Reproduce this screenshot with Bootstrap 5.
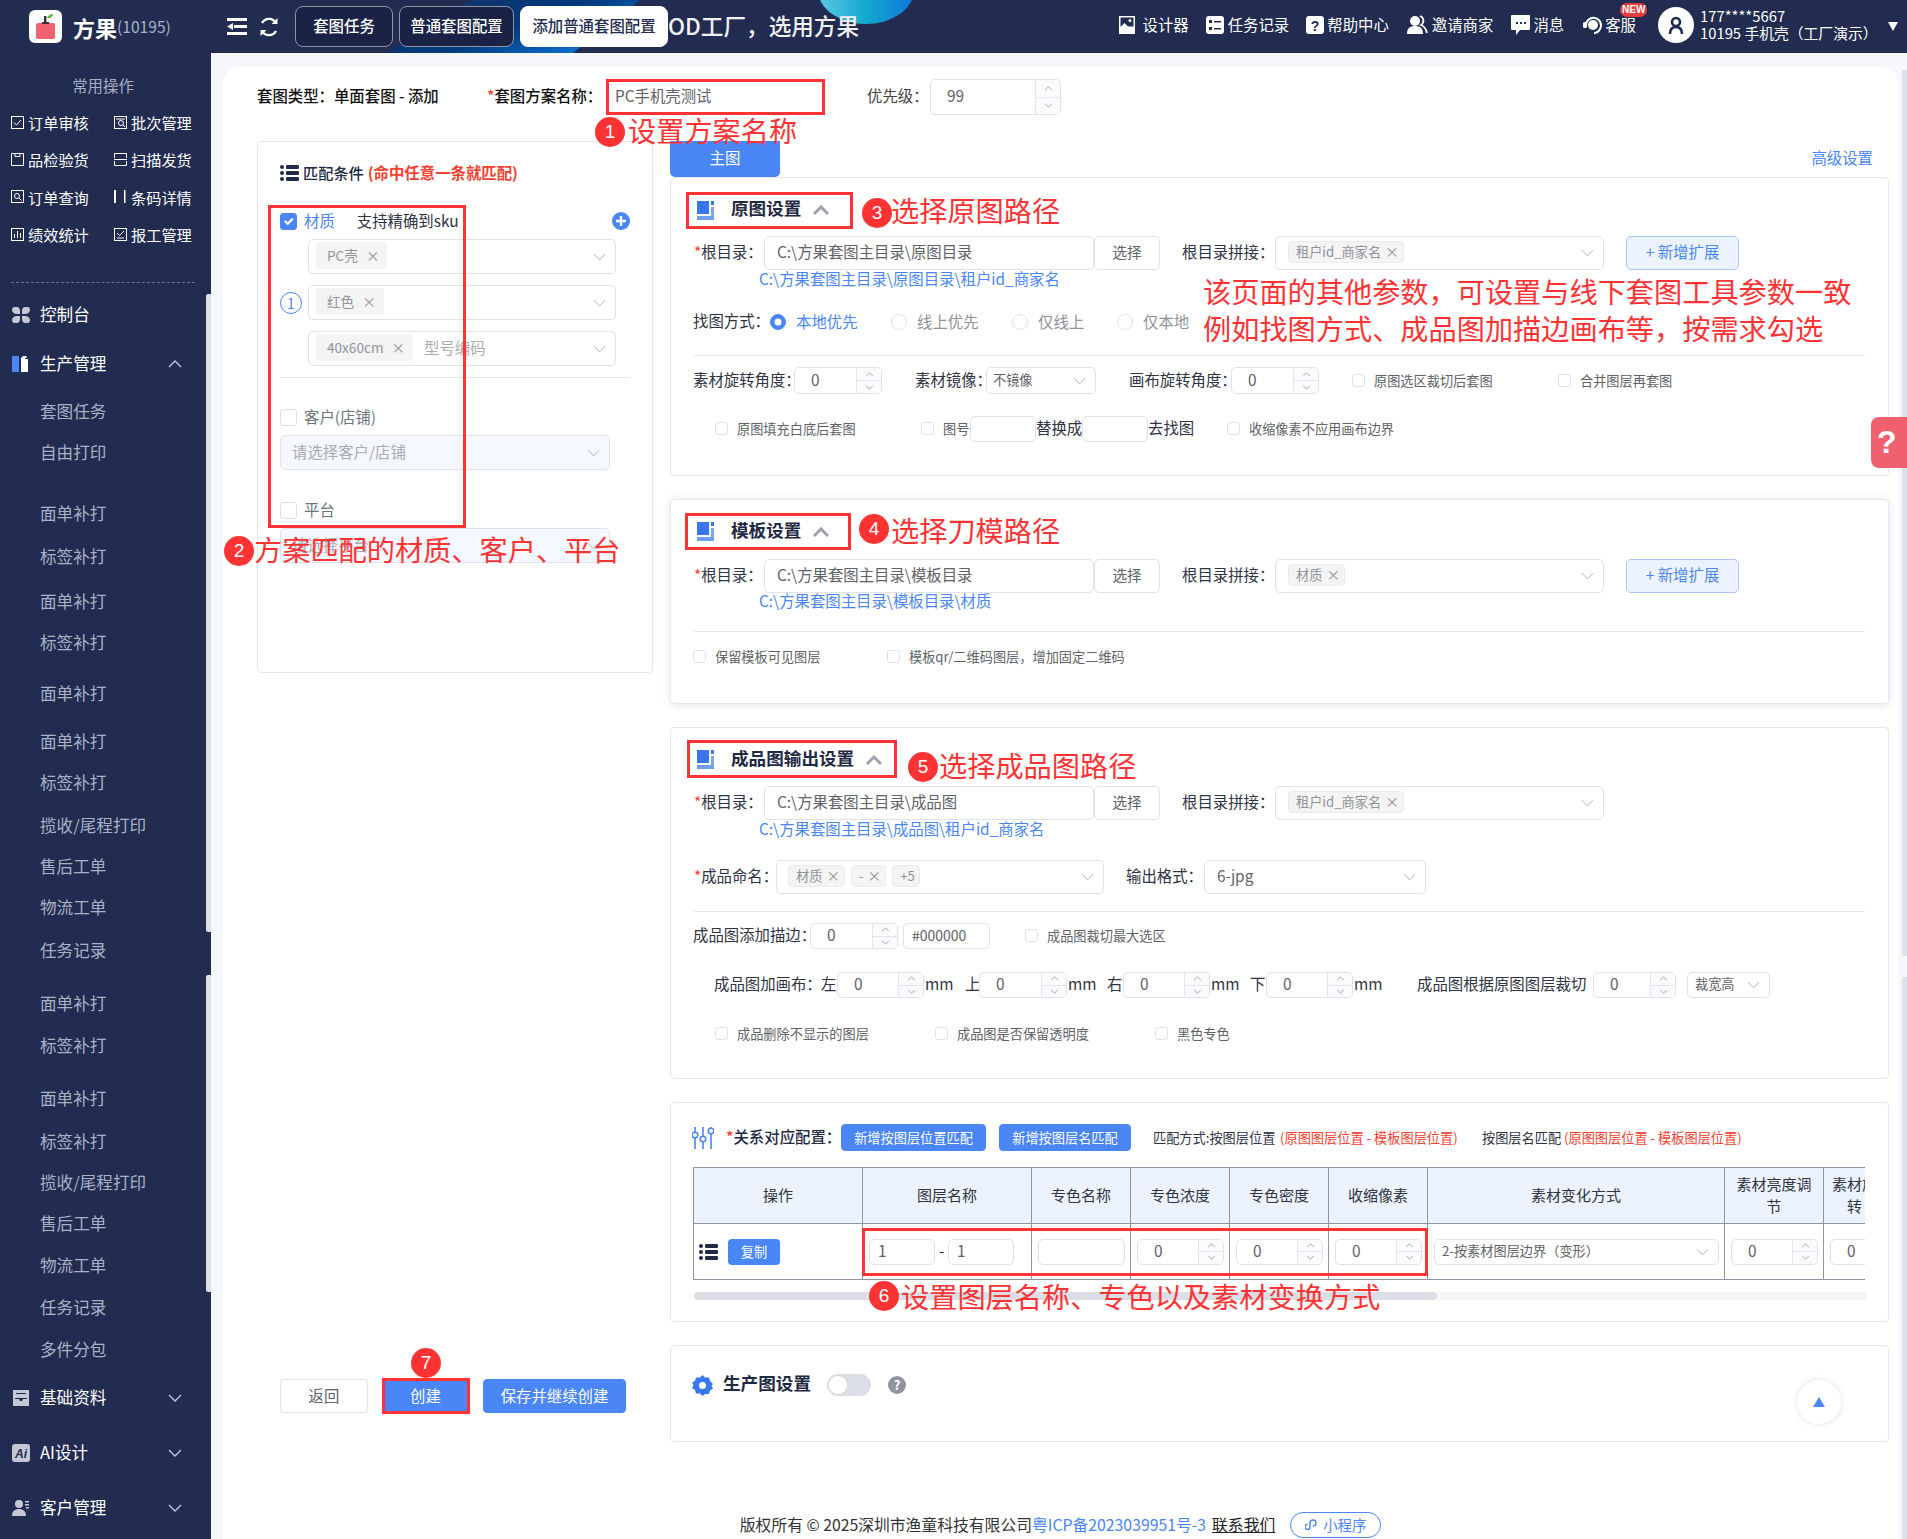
<!doctype html>
<html lang="zh-CN">
<head>
<meta charset="utf-8">
<title>添加普通套图配置</title>
<link href="https://cdn.jsdelivr.net/npm/bootstrap@5.3.0/dist/css/bootstrap.min.css" rel="stylesheet">
<style>
body{width:1907px;height:1539px;overflow:hidden;position:relative;margin:0;background:#f5f7fd;font-family:"Noto Sans CJK SC","Noto Sans",sans-serif;font-size:15.4px;color:#2f3342}
/* atoms */
.ml1{margin-left:1px}.ml2{margin-left:2px}.ml3{margin-left:3px}.ml4{margin-left:4px}.ml5{margin-left:5px}.ml6{margin-left:6px}.ml7{margin-left:7px}.ml8{margin-left:8px}.ml10{margin-left:10px}.ml11{margin-left:11px}.ml12{margin-left:12px}.ml13{margin-left:13px}.ml14{margin-left:14px}.ml17{margin-left:17px}.ml18{margin-left:18px}.ml19{margin-left:19px}.ml20{margin-left:20px}.ml21{margin-left:21px}.ml22{margin-left:22px}.ml23{margin-left:23px}.ml32{margin-left:32px}.ml33{margin-left:33px}.ml34{margin-left:34px}.ml42{margin-left:42px}
.mt1{margin-top:1px}.mt7{margin-top:7px}.mt8{margin-top:8px}.mt9{margin-top:9px}.mt11{margin-top:11px}.mt12{margin-top:12px}.mt13{margin-top:13px}.mt14{margin-top:14px}.mt15{margin-top:15px}.mt16{margin-top:16px}.mt17{margin-top:17px}.mt20{margin-top:20px}.mt21{margin-top:21px}.mt22{margin-top:22px}.mt23{margin-top:23px}.mt26{margin-top:26px}.mt28{margin-top:28px}.mt29{margin-top:29px}.mt30{margin-top:30px}
.wd14{width:14px}.wd16{width:16px}.wd27{width:27px}.wd29{width:29px}.wd46{width:46px}.wd47{width:47px}.wd66{width:66px}.wd67{width:67px}.wd75{width:75px}.wd76{width:76px}.wd78{width:78px}.wd83{width:83px}.wd87{width:87px}.wd88{width:88px}.wd97{width:97px}.wd105{width:105px}.wd110{width:110px}.wd113{width:113px}.wd121{width:121px}.wd122{width:122px}.wd131{width:131px}.wd171{width:171px}.wd179{width:179px}.wd194{width:194px}.wd206{width:206px}.wd219{width:219px}.wd220{width:220px}.wd222{width:222px}.wd330{width:330px}.wd328{width:328px}
.ht20{height:20px}.ht24{height:24px}.ht26{height:26px}.ht27{height:27px}.ht34{height:34px}.ht35{height:35px}.ht36{height:36px}.ht37{height:37px}.ht38{height:38px}
.nw{white-space:nowrap}
.sm13{font-size:13.2px}
.gap6{gap:6px}
/* top bar */
.topbar{height:53px;background:#212c50;position:relative;overflow:hidden;padding-left:29px}
.swoosh{position:absolute;left:0;top:0}
.logo-box{width:33px;height:33px;background:#fff;border-radius:6px;flex:none}
.brand-name{font-size:22px;font-weight:700;color:#fff;margin-left:11px;line-height:1}
.brand-id{font-size:15.6px;color:#a9b1c6;width:96px;line-height:1}
.hd-btn{width:20px;flex:none;color:#fff}
.tabx{height:41px;border:1px solid #8f94a6;border-radius:8px;background:#1a2346;color:#fff;font-size:15.4px;font-weight:500;display:flex;align-items:center;justify-content:center;position:relative;flex:none;padding-bottom:2px}
.tab1{width:98px;margin-left:16px}.tab2{width:115px;margin-left:6px}.tab3{width:148px;margin-left:6px;background:#fff;color:#212c50;border-color:#fff}
.slogan{font-size:22.6px;font-weight:500;color:#f0f1f5;position:relative;line-height:1;white-space:nowrap;width:192px}
.tool{display:flex;align-items:center;color:#fff;font-size:15.4px;line-height:1;white-space:nowrap;position:relative}
.tool svg{flex:none}
.tools{margin-left:auto;position:relative;padding:0 9px 3px 0}
.newtag{position:absolute;left:37px;top:-12px;width:27px;height:14px;border-radius:7px;background:#e53c3c;color:#fff;font-size:10px;font-weight:700;line-height:14px;text-align:center;font-family:"Liberation Sans",sans-serif}
.ava{width:36px;height:36px;border-radius:50%;background:#fff;display:flex;align-items:center;justify-content:center;flex:none}
.who{width:188px;margin-left:6px;margin-bottom:3px;color:#fff;font-size:14.8px;line-height:17px;white-space:nowrap}
.caret-d{width:0;height:0;border-left:5px solid transparent;border-right:5px solid transparent;border-top:9px solid #fff;margin-top:2px}
/* sidebar */
.bodywrap{height:1486px}
.sideb{width:211px;flex:none;background:#212c50;position:relative;overflow:hidden}
.sb-title{height:22px;line-height:22px;margin-top:21px;text-align:center;color:#a9b1c6;font-size:15.4px;width:206px}
.quick{display:grid;grid-template-columns:103px 103px;padding-left:11px;margin-top:8px}
.qitem{height:37.2px;display:flex;align-items:center;gap:4px;color:#fff;font-size:15.2px;white-space:nowrap}
.qitem svg{flex:none}
.dash{border-top:1px dashed #6b7490;width:184px;margin:29px 0 0 11px}
.mitem{height:42px;display:flex;align-items:center;color:#fff;font-size:16.6px;padding-left:12px;position:relative}
.mitem .mi-ic{width:18px;height:18px;flex:none;margin-right:10px}
.mitem .arrow{position:absolute;left:168px;top:17px}
.si{height:41px;line-height:41px;padding-left:40px;color:#a9b1c6;font-size:16.6px;white-space:nowrap}
.gt1{margin-top:1px}.gt2{margin-top:2px}.gt4{margin-top:4px}.gt7{margin-top:7px}.gt10{margin-top:10px}.gt12{margin-top:12px}.gt20{margin-top:20px}
.mg6{margin-top:6px}.mg7{margin-top:7px}.mg11{margin-top:11px}.mg13{margin-top:13px}
.sbar{position:absolute;left:206px;width:5px;background:#dcdee8;border-radius:2px 0 0 2px}
.sbar1{top:241px;height:638px}.sbar2{top:922px;height:317px}
/* main */
.mainp{flex:1;min-width:0;padding:14px 9px 0 12px}
.panel{background:#fff;border-radius:16px 16px 0 0;height:1472px;padding:12px 9px 0 34px}
.toprow{height:36px;margin-bottom:26px;white-space:nowrap;color:#111;font-weight:500}
.req{color:#f5412f}
.fld.form-control,.fld.form-select{min-height:0;border:1px solid #dfe1ec;border-radius:5px;padding:0 12px 2px;font-size:15.4px;color:#606266;display:flex;align-items:center;line-height:1;background-color:#fff;white-space:nowrap;flex:none}
.fld.form-select{background-image:url("data:image/svg+xml,%3Csvg xmlns='http://www.w3.org/2000/svg' viewBox='0 0 14 8'%3E%3Cpath d='M1 1l6 6 6-6' fill='none' stroke='%23a8abb2'/%3E%3C/svg%3E");background-size:13px 8px;background-position:right 9px center;background-repeat:no-repeat;padding-right:28px}
.fld.dis{background-color:#f5f8ff;color:#a8abb2;padding-left:11px}
.numb.form-control{padding:0 0 0 16px;justify-content:space-between;align-items:stretch}
.numb>span:first-child{align-self:center;padding-bottom:2px}
.stp{width:25px;border-left:1px solid #e4e6ee;display:flex;flex-direction:column;flex:none;background:#fbfbfd;border-radius:0 4px 4px 0}
.stp i{flex:1;display:block;background-size:9px 5px;background-position:center;background-repeat:no-repeat}
.stp .up{border-bottom:1px solid #e4e6ee;background-image:url("data:image/svg+xml,%3Csvg xmlns='http://www.w3.org/2000/svg' viewBox='0 0 10 6'%3E%3Cpath d='M1 5l4-4 4 4' fill='none' stroke='%23909399'/%3E%3C/svg%3E")}
.stp .dn{background-image:url("data:image/svg+xml,%3Csvg xmlns='http://www.w3.org/2000/svg' viewBox='0 0 10 6'%3E%3Cpath d='M1 1l4 4 4-4' fill='none' stroke='%23909399'/%3E%3C/svg%3E")}
.tg{display:inline-flex;align-items:center;height:27px;padding:0 8px 0 11px;background:#f4f4f5;border-radius:4px;color:#909399;font-size:13.6px;gap:8px;flex:none;line-height:1}
.tg.tiny{height:22px;font-size:13.2px;padding:0 4px 0 7px;gap:4px;border:1px solid #ebebed}
.tg b{font-weight:400;font-size:13.6px}
.ph{color:#a8abb2;margin-left:11px}
/* left */
.leftc{width:396px;flex:none}
.cond{height:532px;border:1px solid #e6e8f0;border-radius:4px;padding:18px 22px 0}
.cond-t{height:25px;color:#1f2a44;font-size:15.2px;font-weight:500}
.cond-r{color:#f5412f;font-size:15.4px;font-weight:700;margin-left:4px}
.form-check-input.cbx{width:17px;height:17px;margin:0;flex:none;border-color:#dcdfe6;border-radius:3px;float:none}
.form-check-input.cbx:checked{background-color:#4a86f5;border-color:#4a86f5}
.form-check-input.cbs{width:13px;height:13px;margin:0;flex:none;border-color:#dfe1ec;border-radius:3px;float:none}
.ck{display:flex;align-items:center;gap:9px;font-size:13.2px;color:#606266;white-space:nowrap}
.lblue{color:#4a86f5}
.sel-stack{display:flex;flex-direction:column;gap:11px;width:308px;margin-left:6px}
.oneoval{width:22px;height:22px;border:1px solid #4a86f5;border-radius:50%;color:#4a86f5;font-size:14px;display:flex;align-items:center;justify-content:center;flex:none;line-height:1}
hr.divl{border-top:1px solid #e4e6ee;margin-left:0;margin-right:0;margin-bottom:0;opacity:1}
.btnx{height:34px;font-size:15.4px;padding:0 0 1px;border-radius:4px;line-height:1}
.btn-pri{background:#4a86f5;color:#fff;border:1px solid #4a86f5}
.btn-pln{background:#fff;color:#606266;border:1px solid #dfe1ec}
.foot-btns{margin-top:706px;padding-left:23px}
/* right */
.rightc{width:1219px;margin-left:17px;flex:none}
.tabrow{height:36px;padding-right:16px}
.hlink{padding-bottom:2px}
.mtab{width:110px;height:36px;background:#4a86f5;color:#fff;border-radius:0 0 5px 5px;display:flex;align-items:center;justify-content:center;padding-bottom:2px}
.stack{display:flex;flex-direction:column;gap:23px}
.secx{border:1px solid #e6e8f0;border-radius:4px;padding:0 23px 0 23px;background:#fff;position:relative}
.hs1{height:299px}.hs2{height:205px;box-shadow:0 1px 8px rgba(60,70,110,.14)}.hs3{height:352px}.hs4{height:220px}.hs5{height:97px}
.s-head{display:flex;align-items:center;padding-left:3px}
.s-title{font-size:17.6px;font-weight:700;color:#1f2a44;margin-left:16px;white-space:nowrap;line-height:1;padding-bottom:5px}
.lb-root{width:63px;margin-right:7px;text-align:right;white-space:nowrap;flex:none;padding-bottom:2px}
.ip-root{width:330px}
.bt-choose{width:66px;flex:none;background:#fff;border:1px solid #dfe1ec;border-radius:5px;color:#606266;font-size:14.6px;height:34px;padding:0 0 3px}
.lb-join{margin-left:22px;width:93px;white-space:nowrap;flex:none;padding-bottom:2px}
.sel-join{width:329px}
.bt-add{width:113px;height:34px;margin-left:22px;background:#ecf3fe;border:1px solid #a9c8fa;border-radius:5px;color:#4a86f5;font-size:15.4px;padding:0 0 3px;flex:none;line-height:1}
.pathl{margin-left:65px;height:18px;line-height:14px;color:#4a86f5;white-space:nowrap}
.lbw{white-space:nowrap;flex:none;padding-bottom:2px}
.rdi{display:flex;align-items:center;gap:10px;white-space:nowrap;flex:none;color:#909399;padding-bottom:1px}
.rdi.lblue{color:#4a86f5}
.form-check-input.rad{width:16px;height:16px;margin:0;float:none;border-color:#dfe1ec}
.form-check-input.rad:checked{background-color:#4a86f5;border-color:#4a86f5}
.ri-n{margin-left:-1px}
.btn-s{height:27px;font-size:13.2px;padding:0;flex:none;border-radius:4px;background:#4a86f5;border:1px solid #4a86f5;color:#fff}
.wb145{width:145px}.wb132{width:132px}
.tbwrap{width:1172px;overflow:hidden;margin-left:-1px}
.tbx.table{table-layout:fixed;width:1230px;margin:0;border-collapse:collapse;--bs-table-border-color:#8f95a6;font-size:15px}
.tbx th{height:56px;background:#ecf3fe;font-weight:400;text-align:center;vertical-align:middle;padding:0 8px 2px;line-height:22px;color:#2f3342;border:1px solid #8f95a6}
.tbx td{height:56px;padding:0;vertical-align:middle;border:1px solid #8f95a6}
.c1{width:169px}.c2{width:169px}.c3{width:99px}.c4{width:297px}
.td-in{display:flex;align-items:center;padding:0 6px}
.sbx{height:8px;background:#f5f5f7;border-radius:4px;width:1172px;margin-top:12px}
.sbx div{height:8px;width:743px;background:#dcdee6;border-radius:4px}
.copyb{width:52px;height:26px;font-size:13.2px;padding:0;margin-left:10px;background:#4a86f5;border:0;border-radius:4px;color:#fff}
.togx{width:44px;height:22px;border-radius:11px;background:#dcdee6;position:relative;margin-left:16px}
.togx::after{content:"";position:absolute;left:2px;top:2px;width:18px;height:18px;border-radius:50%;background:#fff}
.qmk{width:18px;height:18px;background:#90949f;color:#fff;border-radius:50%;font-size:13px;font-weight:700;line-height:18px;text-align:center;margin-left:17px}
.totop{position:absolute;left:1126px;top:34px;width:44px;height:44px;border-radius:50%;background:#fff;box-shadow:0 0 6px rgba(60,70,110,.16);display:flex;align-items:center;justify-content:center}
.tri{width:0;height:0;border-left:6px solid transparent;border-right:6px solid transparent;border-bottom:10px solid #4a86f5}
.footx{height:26px;margin-top:70px;color:#333;font-size:15.8px;white-space:nowrap;margin-left:-34px;margin-right:-9px}
.footx u{margin-left:6px;color:#222}
.pillm{width:91px;height:26px;border:1px solid #4a86f5;border-radius:13px;color:#4a86f5;font-size:14.4px;margin-left:15px;display:flex;align-items:center;justify-content:center;gap:5px}
/* scroll + help */
.psb{position:absolute;left:1902px;width:5px;background:#dfe1e9}
.psb1{top:70px;height:886px}.psb2{top:977px;height:562px}
.helpt{position:absolute;left:1871px;top:417px;width:36px;height:51px;background:#f0606f;border-radius:8px 0 0 8px;color:#fff;font-size:32px;font-weight:700;line-height:51px;padding-left:6px;font-family:"Liberation Sans",sans-serif}
/* overlay annotations */
.rb{position:absolute;border:3px solid #ff3333}
.rb1{left:606px;top:79px;width:219px;height:36px}
.rb2{left:268px;top:205px;width:198px;height:323px}
.rb3{left:686px;top:192px;width:167px;height:37px}
.rb4{left:685px;top:513px;width:166px;height:37px}
.rb5{left:687px;top:740px;width:210px;height:38px}
.rb6{left:862px;top:1228px;width:566px;height:48px}
.rb7{left:382px;top:1378px;width:88px;height:36px}
.cn{position:absolute;width:30px;height:30px;border-radius:50%;background:#ff3333;color:#fff;font-size:19px;line-height:30px;text-align:center;font-family:"Liberation Sans",sans-serif}
.cn1{left:595px;top:117px}.cn2{left:224px;top:536px}.cn3{left:862px;top:198px}.cn4{left:859px;top:514px}.cn5{left:908px;top:752px}.cn6{left:869px;top:1281px}.cn7{left:411px;top:1348px}
.tx{position:absolute;color:#ff3333;font-size:28.2px;line-height:40px;white-space:nowrap}
.tx1{left:628px;top:110px}.tx2{left:254px;top:529px}.tx3{left:891px;top:190px}.tx4{left:891px;top:510px}.tx5{left:939px;top:745px}.tx6{left:901px;top:1276px}.tx7{left:1203px;top:271px}.tx8{left:1203px;top:308px}
</style>
</head>
<body>
<svg width="0" height="0" class="position-absolute">
  <defs>
    <symbol id="sec" viewBox="0 0 18 20"><rect x="0" y="0" width="12" height="13" fill="#3a77ef"/><rect x="14" y="0" width="3" height="4" fill="#3a77ef"/><rect x="14" y="6" width="3" height="9" fill="#7ba6f5"/><rect x="0" y="15" width="17" height="4" fill="#6f9ff5"/></symbol>
    <symbol id="lst" viewBox="0 0 19 16"><g fill="#1f2a44"><circle cx="2" cy="2" r="2"/><circle cx="2" cy="8" r="2"/><circle cx="2" cy="14" r="2"/><rect x="6" y="0" width="13" height="4" rx="1.2"/><rect x="6" y="6" width="13" height="4" rx="1.2"/><rect x="6" y="12" width="13" height="4" rx="1.2"/></g></symbol>
    <symbol id="dn" viewBox="0 0 14 8"><path d="M1 1l6 6 6-6" fill="none" stroke="#c5cad8" stroke-width="1.3"/></symbol>
    <symbol id="up" viewBox="0 0 18 11"><path d="M2 9l7-7 7 7" fill="none" stroke="#a0a3ad" stroke-width="3"/></symbol>
  </defs>
</svg>

<header class="topbar d-flex align-items-center">
  <svg class="swoosh" width="950" height="53" viewBox="0 0 950 53">
    <defs>
      <linearGradient id="gs" x1="0" y1="0" x2="1" y2="0.6"><stop offset="0" stop-color="#18305f"/><stop offset="0.6" stop-color="#003a7d"/><stop offset="1" stop-color="#0f70d2"/></linearGradient>
      <linearGradient id="gb" x1="0" y1="0" x2="1" y2="0"><stop offset="0" stop-color="#5cc8e6"/><stop offset="0.5" stop-color="#14a8cf"/><stop offset="1" stop-color="#0d78d6"/></linearGradient>
    </defs>
    <path d="M388 53L470 0H640L573 53Z" fill="url(#gs)"/>
    <ellipse cx="866" cy="-10" rx="48" ry="34" fill="url(#gb)"/>
  </svg>
  <svg class="logo-box position-relative" viewBox="0 0 33 33"><rect x="7" y="13" width="19" height="16" rx="2" fill="#f2616f"/><rect x="15" y="6" width="2.4" height="8" fill="#333"/><rect x="13" y="12" width="7" height="2" fill="#333"/><path d="M18 8c1-3 4-4 6-4 0 3-3 5-6 4z" fill="#62b244"/></svg>
  <span class="brand-name position-relative nw">方果</span><span class="brand-id position-relative">(10195)</span>
  <svg class="hd-btn position-relative ml14" viewBox="0 0 20 17" height="17"><g fill="#fff"><rect x="0" y="0" width="20" height="3"/><rect x="0" y="14" width="20" height="3"/><rect x="7" y="7" width="13" height="3"/><path d="M0 8.5L6 5v7z"/></g></svg>
  <svg class="hd-btn position-relative ml12" viewBox="0 0 20 20" height="20"><path d="M17 6A8 8 0 0 0 3 6M3 14a8 8 0 0 0 14 0" fill="none" stroke="#fff" stroke-width="2.4"/><path d="M18.5 1v6h-6zM1.500 19v-6h6z" fill="#fff"/></svg>
  <div class="tabx tab1">套图任务</div>
  <div class="tabx tab2">普通套图配置</div>
  <div class="tabx tab3">添加普通套图配置</div>
  <div class="slogan">OD工厂，选用方果</div>
  <nav class="tools d-flex align-items-center">
    <div class="tool"><svg width="16" height="18" viewBox="0 0 16 18"><rect width="16" height="18" fill="#fff"/><rect x="1.500" y="1.500" width="13" height="9" fill="#212c50"/><circle cx="11" cy="4.500" r="1.500" fill="#fff"/><path d="M1.500 11l4-4 4 4z" fill="#fff"/></svg><span class="ml7">设计器</span></div>
    <div class="tool ml17"><svg width="18" height="18" viewBox="0 0 18 18"><rect width="18" height="18" rx="3" fill="#fff"/><g fill="#212c50"><rect x="3" y="4" width="3" height="3"/><rect x="8" y="5" width="7" height="1.500"/><rect x="3" y="11" width="3" height="3"/><rect x="8" y="12" width="7" height="1.500"/></g></svg><span class="ml4">任务记录</span></div>
    <div class="tool ml17"><svg width="18" height="18" viewBox="0 0 18 18"><rect width="18" height="18" rx="3" fill="#fff"/><text x="9" y="14.500" text-anchor="middle" font-size="14" font-weight="700" fill="#212c50" font-family="Liberation Sans">?</text></svg><span class="ml3">帮助中心</span></div>
    <div class="tool ml18"><svg width="21" height="20" viewBox="0 0 21 20"><circle cx="8" cy="6" r="5" fill="#fff"/><path d="M0 19c0-6 3-8 8-8s8 2 8 8z" fill="#fff"/><path d="M13 1a5 5 0 0 1 1 9c3 1 5 4 6 8" fill="none" stroke="#fff" stroke-width="1.800"/></svg><span class="ml4">邀请商家</span></div>
    <div class="tool ml18"><svg width="19" height="20" viewBox="0 0 19 20"><path d="M1 0h17a1 1 0 0 1 1 1v13a1 1 0 0 1-1 1H9l-4 5v-5H1a1 1 0 0 1-1-1V1a1 1 0 0 1 1-1z" fill="#fff"/><g fill="#212c50"><rect x="5" y="7" width="2" height="2"/><rect x="9" y="7" width="2" height="2"/><rect x="13" y="7" width="2" height="2"/></g></svg><span class="ml3">消息</span></div>
    <div class="tool ml19"><svg width="20" height="20" viewBox="0 0 20 20"><path d="M3 11a7.500 7.500 0 1 1 14 3c-1 2-3 4-6 4" fill="none" stroke="#fff" stroke-width="2"/><circle cx="10" cy="10" r="5" fill="#fff"/><rect x="0" y="7" width="4" height="6" rx="1.500" fill="#fff"/></svg><span class="ml2">客服</span><span class="newtag">NEW</span></div>
    <div class="ava ml22"><svg width="16" height="19" viewBox="0 0 16 19"><circle cx="8" cy="6" r="4" fill="none" stroke="#212c50" stroke-width="2.600"/><path d="M2 18c0-4 2-7 6-7s6 3 6 7" fill="none" stroke="#212c50" stroke-width="2.600"/></svg></div>
    <div class="who">177****5667<br>10195 手机壳（工厂演示）</div>
    <span class="caret-d"></span>
  </nav>
</header>

<div class="bodywrap d-flex">
  <aside class="sideb">
    <div class="sb-title">常用操作</div>
    <div class="quick">
      <div class="qitem"><svg width="13" height="13" viewBox="0 0 13 13"><rect x=".5" y=".5" width="12" height="12" fill="none" stroke="#fff"/><path d="M3 6.500l2.500 2.500L10 4" fill="none" stroke="#fff"/></svg>订单审核</div>
      <div class="qitem"><svg width="13" height="13" viewBox="0 0 13 13"><rect x=".5" y=".5" width="12" height="12" fill="none" stroke="#fff"/><circle cx="7" cy="7" r="2.500" fill="none" stroke="#fff"/><path d="M9 9l2 2M2 3h9" stroke="#fff"/></svg>批次管理</div>
      <div class="qitem"><svg width="13" height="13" viewBox="0 0 13 13"><path d="M.5.500h12v12H.5zM4 .5v3h5v-3" fill="none" stroke="#fff"/></svg>品检验货</div>
      <div class="qitem"><svg width="13" height="13" viewBox="0 0 13 13"><path d="M.5 5V.5h12V5M.5 8v4.500h12V8M0 6.500h13" fill="none" stroke="#fff"/></svg>扫描发货</div>
      <div class="qitem"><svg width="13" height="13" viewBox="0 0 13 13"><rect x=".5" y=".5" width="12" height="12" fill="none" stroke="#fff"/><circle cx="6" cy="6" r="2.500" fill="none" stroke="#fff"/><path d="M8 8l2.500 2.500" stroke="#fff"/></svg>订单查询</div>
      <div class="qitem"><svg width="13" height="13" viewBox="0 0 13 13"><rect x="0" y="0" width="2" height="13" fill="#fff"/><rect x="10" y="0" width="1.500" height="13" fill="#fff"/></svg>条码详情</div>
      <div class="qitem"><svg width="13" height="13" viewBox="0 0 13 13"><rect x=".5" y=".5" width="12" height="12" fill="none" stroke="#fff"/><path d="M3.500 10V6M6.500 10V3M9.500 10V5" stroke="#fff"/></svg>绩效统计</div>
      <div class="qitem"><svg width="13" height="13" viewBox="0 0 13 13"><rect x=".5" y=".5" width="12" height="12" fill="none" stroke="#fff"/><path d="M3 5l2.500 2.500L10 3M3 10h7" fill="none" stroke="#fff"/></svg>报工管理</div>
    </div>
    <div class="dash"></div>
    <div class="mitem mg11"><svg class="mi-ic" viewBox="0 0 18 18"><g fill="#c4c8d4"><path d="M2 1h3c2 0 3 2 3 4v3H5C2 8 0 6 0 4c0-1.500 1-3 2-3z"/><path d="M16 1h-3c-2 0-3 2-3 4v3h3c3 0 5-2 5-4 0-1.500-1-3-2-3z"/><path d="M2 17h3c2 0 3-2 3-4v-3H5c-3 0-5 2-5 4 0 1.500 1 3 2 3z"/><path d="M16 17h-3c-2 0-3-2-3-4v-3h3c3 0 5 2 5 4 0 1.500-1 3-2 3z"/></g></svg>控制台</div>
    <div class="mitem mg7"><svg class="mi-ic" viewBox="0 0 18 18"><rect x="0" y="1" width="7" height="16" fill="#4a86f5"/><path d="M9 3l2-2h3l1 2h-2v1h3v13H9z" fill="#fff"/></svg>生产管理<svg class="arrow" width="14" height="8"><use href="#dn" transform="rotate(180 7 4)"/></svg></div>
    <div class="mg6"></div>
    <div class="si">套图任务</div>
    <div class="si">自由打印</div>
    <div class="si gt20">面单补打</div>
    <div class="si gt2">标签补打</div>
    <div class="si gt4">面单补打</div>
    <div class="si">标签补打</div>
    <div class="si gt10">面单补打</div>
    <div class="si gt7">面单补打</div>
    <div class="si">标签补打</div>
    <div class="si gt2">揽收/尾程打印</div>
    <div class="si">售后工单</div>
    <div class="si">物流工单</div>
    <div class="si gt2">任务记录</div>
    <div class="si gt12">面单补打</div>
    <div class="si gt1">标签补打</div>
    <div class="si gt12">面单补打</div>
    <div class="si gt2">标签补打</div>
    <div class="si">揽收/尾程打印</div>
    <div class="si">售后工单</div>
    <div class="si gt1">物流工单</div>
    <div class="si gt1">任务记录</div>
    <div class="si gt1">多件分包</div>
    <div class="mitem mg7"><svg class="mi-ic" viewBox="0 0 18 18"><path d="M1 1h16v16H1z" fill="#c4c8d4"/><path d="M3 10h4l1 2h2l1-2h4v-1H3zM4 4h10v1H4z" fill="#212c50"/></svg>基础资料<svg class="arrow" width="14" height="8"><use href="#dn"/></svg></div>
    <div class="mitem mg13"><svg class="mi-ic" viewBox="0 0 18 18"><rect width="18" height="18" rx="3" fill="#c4c8d4"/><text x="9" y="14" text-anchor="middle" font-size="12" font-weight="700" font-style="italic" fill="#212c50" font-family="Liberation Sans">Ai</text></svg>AI设计<svg class="arrow" width="14" height="8"><use href="#dn"/></svg></div>
    <div class="mitem mg13"><svg class="mi-ic" viewBox="0 0 18 18"><circle cx="7" cy="5" r="4" fill="#c4c8d4"/><path d="M0 17c0-5 3-7 7-7s7 2 7 7z" fill="#c4c8d4"/><rect x="13" y="2" width="4" height="1.500" fill="#c4c8d4"/><rect x="13" y="5" width="4" height="1.500" fill="#c4c8d4"/><rect x="14" y="8" width="3" height="1.500" fill="#c4c8d4"/></svg>客户管理<svg class="arrow" width="14" height="8"><use href="#dn"/></svg></div>
    <div class="sbar sbar1"></div>
    <div class="sbar sbar2"></div>
  </aside>

  <main class="mainp">
    <div class="panel">
      <div class="toprow d-flex align-items-center">
        <div style="width:230px;padding-bottom:2px">套图类型：单面套图 - 添加</div>
        <div style="width:119px;padding-bottom:2px"><span class="req">*</span>套图方案名称：</div>
        <div class="form-control fld wd219 ht36" style="padding-left:8px">PC手机壳测试</div>
        <div class="ml42" style="width:63px;font-weight:400;color:#444;padding-bottom:2px">优先级：</div>
        <div class="form-control fld numb wd131 ht36" style="font-weight:400"><span>99</span><span class="stp"><i class="up"></i><i class="dn"></i></span></div>
      </div>

      <div class="d-flex">
        <div class="leftc">
          <div class="cond">
            <div class="cond-t d-flex align-items-center"><svg width="19" height="16" class="me-1"><use href="#lst"/></svg>匹配条件<span class="cond-r">(命中任意一条就匹配)</span></div>
            <div class="d-flex align-items-center ht20 mt26">
              <input class="form-check-input cbx" type="checkbox" checked aria-label="材质">
              <span class="lblue ml7">材质</span>
              <span class="ml22">支持精确到sku</span>
              <svg class="ms-auto" width="18" height="18" viewBox="0 0 18 18"><circle cx="9" cy="9" r="9" fill="#4a86f5"/><path d="M9 4v10M4 9h10" stroke="#fff" stroke-width="2.400"/></svg>
            </div>
            <div class="d-flex align-items-center mt8">
              <span class="oneoval">1</span>
              <div class="sel-stack">
                <div class="form-select fld ht35" style="padding-left:7px"><span class="tg">PC壳<b>×</b></span></div>
                <div class="form-select fld ht35" style="padding-left:7px"><span class="tg">红色<b>×</b></span></div>
                <div class="form-select fld ht35" style="padding-left:7px"><span class="tg">40x60cm<b>×</b></span><span class="ph">型号编码</span></div>
              </div>
            </div>
            <hr class="divl mt11">
            <div class="d-flex align-items-center ht20 mt29"><input class="form-check-input cbx" type="checkbox" aria-label="客户"><span class="ml7 text-secondary">客户(店铺)</span></div>
            <div class="form-select fld dis wd330 ht35 mt8">请选择客户/店铺</div>
            <div class="d-flex align-items-center ht20 mt30"><input class="form-check-input cbx" type="checkbox" aria-label="平台"><span class="ml7 text-secondary">平台</span></div>
            <div class="form-select fld dis wd330 ht35 mt8">请选择平台</div>
          </div>
          <div class="foot-btns d-flex">
            <button class="btn btnx btn-pln wd88" type="button">返回</button>
            <button class="btn btnx btn-pri wd87 ml14" type="button">创建</button>
            <button class="btn btnx btn-pri ml14" style="width:143px" type="button">保存并继续创建</button>
          </div>
        </div>

        <div class="rightc">
          <div class="tabrow d-flex align-items-center justify-content-between">
            <div class="mtab">主图</div>
            <a class="lblue text-decoration-none hlink" href="#">高级设置</a>
          </div>
          <div class="stack">
            <!-- 原图设置 -->
            <section class="secx hs1">
              <div class="s-head ht37 mt14"><svg width="18" height="20"><use href="#sec"/></svg><span class="s-title">原图设置</span><svg class="ml11" width="18" height="11"><use href="#up"/></svg></div>
              <div class="d-flex align-items-center ht34 mt7">
                <span class="lb-root"><span class="req">*</span>根目录：</span>
                <div class="form-control fld ip-root ht34">C:\方果套图主目录\原图目录</div>
                <button class="bt-choose" type="button">选择</button>
                <span class="lb-join">根目录拼接：</span>
                <div class="form-select fld sel-join ht34"><span class="tg tiny">租户id_商家名<b>×</b></span></div>
                <button class="bt-add" type="button">+ 新增扩展</button>
              </div>
              <div class="pathl mt1">C:\方果套图主目录\原图目录\租户id_商家名</div>
              <div class="d-flex align-items-center ht24 mt21 ri-n">
                <span class="wd76 lbw" style="margin-right:1px">找图方式：</span>
                <label class="rdi wd121 lblue"><input class="form-check-input rad" type="radio" name="f1" checked>本地优先</label>
                <label class="rdi wd121"><input class="form-check-input rad" type="radio" name="f1">线上优先</label>
                <label class="rdi wd105"><input class="form-check-input rad" type="radio" name="f1">仅线上</label>
                <label class="rdi"><input class="form-check-input rad" type="radio" name="f1">仅本地</label>
              </div>
              <hr class="divl mt21">
              <div class="d-flex align-items-center ht27 mt11 ri-n">
                <span class="wd97 lbw">素材旋转角度：</span>
                <div class="form-control fld numb wd88 ht27 ml4"><span>0</span><span class="stp"><i class="up"></i><i class="dn"></i></span></div>
                <span class="wd67 lbw ml33" style="margin-right:4px">素材镜像：</span>
                <div class="form-select fld wd110 ht27" style="padding-left:6px;font-size:13.2px">不镜像</div>
                <span class="wd97 lbw ml33">画布旋转角度：</span>
                <div class="form-control fld numb wd88 ht27 ml5"><span>0</span><span class="stp"><i class="up"></i><i class="dn"></i></span></div>
                <label class="ck ml33 wd206"><input class="form-check-input cbs" type="checkbox">原图选区裁切后套图</label>
                <label class="ck"><input class="form-check-input cbs" type="checkbox">合并图层再套图</label>
              </div>
              <div class="d-flex align-items-center ht26 mt22">
                <label class="ck ml21 wd206"><input class="form-check-input cbs" type="checkbox">原图填充白底后套图</label>
                <label class="ck" style="width:49px"><input class="form-check-input cbs" type="checkbox">图号</label>
                <div class="form-control fld wd66 ht26" aria-label="图号"></div>
                <span class="wd46 lbw">替换成</span>
                <div class="form-control fld wd66 ht26" aria-label="替换成"></div>
                <span class="wd47 lbw">去找图</span>
                <label class="ck ml32"><input class="form-check-input cbs" type="checkbox">收缩像素不应用画布边界</label>
              </div>
            </section>

            <!-- 模板设置 -->
            <section class="secx hs2">
              <div class="s-head ht36 mt14"><svg width="18" height="20"><use href="#sec"/></svg><span class="s-title">模板设置</span><svg class="ml11" width="18" height="11"><use href="#up"/></svg></div>
              <div class="d-flex align-items-center ht34 mt9">
                <span class="lb-root"><span class="req">*</span>根目录：</span>
                <div class="form-control fld ip-root ht34">C:\方果套图主目录\模板目录</div>
                <button class="bt-choose" type="button">选择</button>
                <span class="lb-join">根目录拼接：</span>
                <div class="form-select fld sel-join ht34"><span class="tg tiny">材质<b>×</b></span></div>
                <button class="bt-add" type="button">+ 新增扩展</button>
              </div>
              <div class="pathl">C:\方果套图主目录\模板目录\材质</div>
              <hr class="divl mt20">
              <div class="d-flex align-items-center ht20 mt15 ri-n">
                <label class="ck wd194"><input class="form-check-input cbs" type="checkbox">保留模板可见图层</label>
                <label class="ck"><input class="form-check-input cbs" type="checkbox">模板qr/二维码图层，增加固定二维码</label>
              </div>
            </section>

            <!-- 成品图输出设置 -->
            <section class="secx hs3">
              <div class="s-head ht38 mt13"><svg width="18" height="20"><use href="#sec"/></svg><span class="s-title">成品图输出设置</span><svg class="ml11" width="18" height="11"><use href="#up"/></svg></div>
              <div class="d-flex align-items-center ht34 mt7">
                <span class="lb-root"><span class="req">*</span>根目录：</span>
                <div class="form-control fld ip-root ht34">C:\方果套图主目录\成品图</div>
                <button class="bt-choose" type="button">选择</button>
                <span class="lb-join">根目录拼接：</span>
                <div class="form-select fld sel-join ht34"><span class="tg tiny">租户id_商家名<b>×</b></span></div>
              </div>
              <div class="pathl mt1">C:\方果套图主目录\成品图\租户id_商家名</div>
              <div class="d-flex align-items-center ht34 mt21">
                <span class="lbw" style="width:82px;text-align:right"><span class="req">*</span>成品命名：</span>
                <div class="form-select fld wd328 ht34 gap6" style="padding-left:11px"><span class="tg tiny">材质<b>×</b></span><span class="tg tiny">-<b>×</b></span><span class="tg tiny">+5</span></div>
                <span class="lbw ml22 wd78">输出格式：</span>
                <div class="form-select fld wd222 ht34">6-jpg</div>
              </div>
              <hr class="divl mt17">
              <div class="d-flex align-items-center ht26 mt11 ri-n">
                <span class="lbw" style="width:117px">成品图添加描边：</span>
                <div class="form-control fld numb wd88 ht26"><span>0</span><span class="stp"><i class="up"></i><i class="dn"></i></span></div>
                <div class="form-control fld wd87 ht26 ml5" style="padding-left:8px;font-size:14px">#000000</div>
                <label class="ck" style="margin-left:35px"><input class="form-check-input cbs" type="checkbox">成品图裁切最大选区</label>
              </div>
              <div class="d-flex align-items-center ht26 mt23">
                <span class="ml20 lbw" style="width:107px">成品图加画布：</span>
                <span class="wd16 lbw">左</span>
                <div class="form-control fld numb wd87 ht26"><span>0</span><span class="stp"><i class="up"></i><i class="dn"></i></span></div>
                <span class="wd29 lbw ml1">mm</span>
                <span class="wd14 lbw ml11">上</span>
                <div class="form-control fld numb wd88 ht26"><span>0</span><span class="stp"><i class="up"></i><i class="dn"></i></span></div>
                <span class="wd29 lbw ml1">mm</span>
                <span class="wd16 lbw ml10">右</span>
                <div class="form-control fld numb wd87 ht26"><span>0</span><span class="stp"><i class="up"></i><i class="dn"></i></span></div>
                <span class="wd29 lbw ml1">mm</span>
                <span class="wd16 lbw ml10">下</span>
                <div class="form-control fld numb wd87 ht26"><span>0</span><span class="stp"><i class="up"></i><i class="dn"></i></span></div>
                <span class="wd29 lbw ml1">mm</span>
                <span class="wd171 lbw ml34">成品图根据原图图层裁切</span>
                <div class="form-control fld numb wd83 ht26 ml5"><span>0</span><span class="stp"><i class="up"></i><i class="dn"></i></span></div>
                <div class="form-select fld wd83 ht26 ml11" style="padding-left:7px;font-size:13.2px">裁宽高</div>
              </div>
              <div class="d-flex align-items-center ht20 mt26">
                <label class="ck ml21 wd220"><input class="form-check-input cbs" type="checkbox">成品删除不显示的图层</label>
                <label class="ck wd220"><input class="form-check-input cbs" type="checkbox">成品图是否保留透明度</label>
                <label class="ck"><input class="form-check-input cbs" type="checkbox">黑色专色</label>
              </div>
            </section>

            <!-- 关系对应配置 -->
            <section class="secx hs4">
              <div class="d-flex align-items-center ht27 mt21 nw sm13" style="margin-left:-2px">
                <svg width="22" height="22" viewBox="0 0 22 22"><g fill="none" stroke="#4a86f5" stroke-width="1.600"><path d="M3 0v5M3 11v11M11 0v9M11 15v7M19 0v1M19 7v15"/><circle cx="3" cy="8" r="2.800"/><circle cx="11" cy="12" r="2.800"/><circle cx="19" cy="4" r="2.800"/></g></svg>
                <span class="ml12" style="width:104px;font-size:15.4px;font-weight:500;color:#1f2a44;padding-bottom:2px"><span class="req">*</span>关系对应配置：</span>
                <button class="btn btn-s wb145 ml11" type="button">新增按图层位置匹配</button>
                <button class="btn btn-s wb132 ml13" type="button">新增按图层名匹配</button>
                <span class="wd122 ml22">匹配方式:按图层位置</span>
                <span class="wd179 ml5 req">(原图图层位置 - 模板图层位置)</span>
                <span class="wd78 ml23">按图层名匹配</span>
                <span class="ml4 req">(原图图层位置 - 模板图层位置)</span>
              </div>
              <div class="tbwrap mt16">
                <table class="table tbx">
                  <colgroup><col class="c1"><col class="c2"><col class="c3"><col class="c3"><col class="c3"><col class="c3"><col class="c4"><col class="c3"><col class="c3"></colgroup>
                  <thead><tr><th>操作</th><th>图层名称</th><th>专色名称</th><th>专色浓度</th><th>专色密度</th><th>收缩像素</th><th>素材变化方式</th><th>素材亮度调节</th><th class="text-start">素材旋转<br>&emsp;转</th></tr></thead>
                  <tbody><tr>
                    <td><div class="d-flex align-items-center" style="padding-left:5px"><svg width="19" height="16"><use href="#lst"/></svg><button class="copyb" type="button">复制</button></div></td>
                    <td><div class="td-in"><div class="form-control fld wd66 ht26" style="padding-left:8px">1</div><span class="text-center" style="width:13px">-</span><div class="form-control fld wd66 ht26" style="padding-left:8px">1</div></div></td>
                    <td><div class="td-in"><div class="form-control fld wd87 ht26" aria-label="专色名称"></div></div></td>
                    <td><div class="td-in"><div class="form-control fld numb wd87 ht26"><span>0</span><span class="stp"><i class="up"></i><i class="dn"></i></span></div></div></td>
                    <td><div class="td-in"><div class="form-control fld numb wd87 ht26"><span>0</span><span class="stp"><i class="up"></i><i class="dn"></i></span></div></div></td>
                    <td><div class="td-in"><div class="form-control fld numb wd87 ht26"><span>0</span><span class="stp"><i class="up"></i><i class="dn"></i></span></div></div></td>
                    <td><div class="td-in"><div class="form-select fld ht26" style="width:285px;padding-left:7px;font-size:13.2px">2-按素材图层边界（变形）</div></div></td>
                    <td><div class="td-in"><div class="form-control fld numb wd87 ht26"><span>0</span><span class="stp"><i class="up"></i><i class="dn"></i></span></div></div></td>
                    <td><div class="td-in"><div class="form-control fld numb wd87 ht26"><span>0</span><span class="stp"><i class="up"></i><i class="dn"></i></span></div></div></td>
                  </tr></tbody>
                </table>
              </div>
              <div class="sbx"><div></div></div>
            </section>

            <!-- 生产图设置 -->
            <section class="secx hs5">
              <div class="d-flex align-items-center mt28" style="height:22px;margin-left:-2px">
                <svg width="21" height="21" viewBox="0 0 21 21"><path d="M10.500 0l2.500 2.500h4l1 3.500 3 3-1.500 1.500 1.500 3-3 2-1 3.500h-4L10.500 21 8 18.500H4L3 15l-3-2 1.500-3L0 7.500 3 6l1-3.500h4z" fill="#3a77ef"/><circle cx="10.500" cy="10.500" r="3.500" fill="#fff"/></svg>
                <span class="s-title ml10" style="margin-left:10px">生产图设置</span>
                <span class="togx"></span>
                <span class="qmk">?</span>
              </div>
              <div class="totop"><span class="tri"></span></div>
            </section>
          </div>
        </div>
      </div>

      <div class="footx d-flex align-items-center justify-content-center">
        <span>版权所有 © 2025深圳市渔童科技有限公司</span><a class="lblue text-decoration-none" href="#">粤ICP备2023039951号-3</a><u>联系我们</u>
        <div class="pillm"><svg width="13" height="14" viewBox="0 0 13 14"><path d="M5 3v6a2.500 2.500 0 1 1-2.500-2.500M5 6V5a3 3 0 1 1 3 3" fill="none" stroke="#4a86f5" stroke-width="1.400"/></svg>小程序</div>
      </div>
    </div>
  </main>
</div>

<div class="psb psb1"></div>
<div class="psb psb2"></div>
<div class="helpt">?</div>

<!-- annotations drawn over the screenshot -->
<div class="rb rb1"></div><div class="rb rb2"></div><div class="rb rb3"></div><div class="rb rb4"></div><div class="rb rb5"></div><div class="rb rb6"></div><div class="rb rb7"></div>
<div class="cn cn1">1</div><div class="tx tx1">设置方案名称</div>
<div class="cn cn2">2</div><div class="tx tx2">方案匹配的材质、客户、平台</div>
<div class="cn cn3">3</div><div class="tx tx3">选择原图路径</div>
<div class="cn cn4">4</div><div class="tx tx4">选择刀模路径</div>
<div class="cn cn5">5</div><div class="tx tx5">选择成品图路径</div>
<div class="cn cn6">6</div><div class="tx tx6">设置图层名称、专色以及素材变换方式</div>
<div class="cn cn7">7</div>
<div class="tx tx7">该页面的其他参数，可设置与线下套图工具参数一致</div>
<div class="tx tx8">例如找图方式、成品图加描边画布等，按需求勾选</div>
<script src="https://cdn.jsdelivr.net/npm/bootstrap@5.3.0/dist/js/bootstrap.bundle.min.js"></script>
</body>
</html>
